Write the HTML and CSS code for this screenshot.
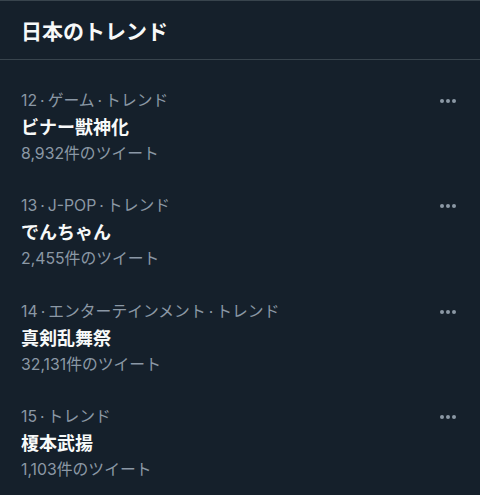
FILE: index.html
```html
<!DOCTYPE html>
<html lang="ja">
<head>
    <meta charset="UTF-8">
    <meta name="viewport" content="width=device-width, initial-scale=1.0">
    <title>日本のトレンド</title>
    <link rel="stylesheet" href="styles.css">
</head>
<body>
    <div class="panel">
        <div class="panel-header">
            <h2>日本のトレンド</h2>
        </div>

        <ul class="trend-list">
            <li class="trend">
                <div class="trend-body">
                    <div class="trend-meta">12<span class="dot">·</span>ゲーム<span class="dot">·</span>トレンド</div>
                    <div class="trend-name">ビナー獣神化</div>
                    <div class="trend-count">8,932件のツイート</div>
                </div>
                <span class="more"><i></i><i></i><i></i></span>
            </li>
            <li class="trend">
                <div class="trend-body">
                    <div class="trend-meta">13<span class="dot">·</span>J-POP<span class="dot">·</span>トレンド</div>
                    <div class="trend-name">でんちゃん</div>
                    <div class="trend-count">2,455件のツイート</div>
                </div>
                <span class="more"><i></i><i></i><i></i></span>
            </li>
            <li class="trend">
                <div class="trend-body">
                    <div class="trend-meta">14<span class="dot">·</span>エンターテインメント<span class="dot">·</span>トレンド</div>
                    <div class="trend-name">真剣乱舞祭</div>
                    <div class="trend-count">32,131件のツイート</div>
                </div>
                <span class="more"><i></i><i></i><i></i></span>
            </li>
            <li class="trend">
                <div class="trend-body">
                    <div class="trend-meta">15<span class="dot">·</span>トレンド</div>
                    <div class="trend-name">榎本武揚</div>
                    <div class="trend-count">1,103件のツイート</div>
                </div>
                <span class="more"><i></i><i></i><i></i></span>
            </li>
        </ul>
    </div>
</body>
</html>
```

FILE: styles.css
```css
body {
    margin: 0;
    background: #15202b;
    font-family: Inter, "Noto Sans CJK JP", sans-serif;
    color: #f7f9f9;
}

.panel {
    border-top: 1px solid #38444d;
    min-height: 494px;
}

.panel-header {
    height: 58px;
    padding: 0 21px;
    display: flex;
    align-items: center;
    border-bottom: 1px solid #38444d;
}

.panel-header h2 {
    margin: 0;
    font-size: 21px;
    font-weight: 700;
}

.trend-list {
    list-style: none;
    margin: 15px 0 0;
    padding: 0;
}

.trend {
    display: flex;
    justify-content: space-between;
    align-items: flex-start;
    padding: 13px 21px 13.3px 21px;
}

.trend-meta,
.trend-count {
    color: #8b98a5;
    font-size: 15.8px;
    line-height: 26px;
}

.dot {
    margin: 0 3px;
}

.trend-name {
    font-size: 18px;
    font-weight: 700;
    line-height: 27px;
}

/* three dots menu */
.more {
    display: flex;
    gap: 2px;
    margin-top: 11px;
    margin-right: 3px;
}

.more i {
    width: 4px;
    height: 4px;
    border-radius: 50%;
    background: #8b98a5;
}
```
